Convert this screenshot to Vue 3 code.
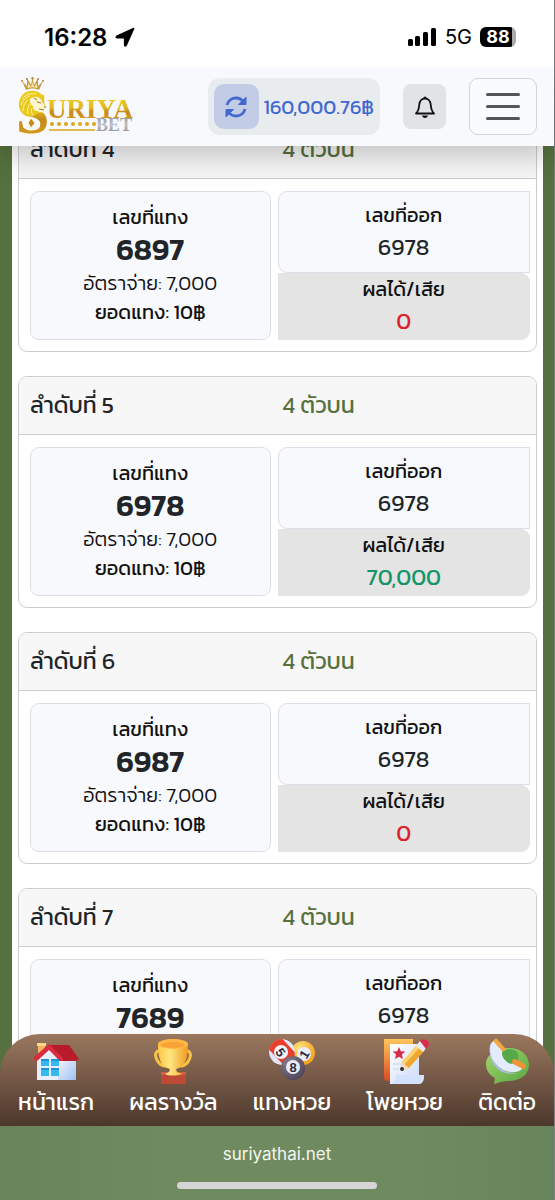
<script setup>
import { onMounted, ref } from 'vue'

const balance = ref('160,000.76฿')
const listRef = ref(null)

const bets = ref([
  { order: 4, type: '4 ตัวบน', number: '6897', rate: '7,000', amount: 10, drawn: '6978', result: '0' },
  { order: 5, type: '4 ตัวบน', number: '6978', rate: '7,000', amount: 10, drawn: '6978', result: '70,000' },
  { order: 6, type: '4 ตัวบน', number: '6987', rate: '7,000', amount: 10, drawn: '6978', result: '0' },
  { order: 7, type: '4 ตัวบน', number: '7689', rate: '7,000', amount: 10, drawn: '6978', result: '0' },
])

const menus = [
  { key: 'home', label: 'หน้าแรก' },
  { key: 'award', label: 'ผลรางวัล' },
  { key: 'lotto', label: 'แทงหวย' },
  { key: 'bill', label: 'โพยหวย' },
  { key: 'contact', label: 'ติดต่อ' },
]

onMounted(() => {
  listRef.value.scrollTop = 26
})
</script>

<template>
  <div class="shell">
    <div class="status">
      <div class="status-side">
        <span class="clock">16:28</span>
        <svg width="20" height="20" viewBox="0 0 20 20">
          <path d="M18.400.8 1.500 8.400c-1.600.8-1.200 3 .5 3h6.200c.4 0 .7.300.7.700v6c0 1.900 2.300 2.200 3 .5L19.400 1.800c.3-.8-.2-1.300-1-1z" fill="#000" />
        </svg>
      </div>
      <div class="status-side">
        <svg width="30" height="20" viewBox="0 0 30 20">
          <rect x="1" y="12" width="5" height="7" rx="1.500" />
          <rect x="8" y="9" width="5" height="10" rx="1.500" />
          <rect x="16" y="5" width="5" height="14" rx="1.500" />
          <rect x="24" y="1" width="5" height="18" rx="1.500" />
        </svg>
        <span class="network">5G</span>
        <span class="battery">88</span>
      </div>
    </div>

    <header class="topbar">
      <a class="logo" href="#" aria-label="Suriya Bet">
        <svg width="118" height="60" viewBox="0 0 118 60">
          <defs>
            <linearGradient id="gold" x1="0" y1="0" x2="0" y2="1">
              <stop offset="0" stop-color="#f3d51f" />
              <stop offset=".45" stop-color="#e2b81c" />
              <stop offset=".6" stop-color="#c58a1c" />
              <stop offset="1" stop-color="#e3a51d" />
            </linearGradient>
            <linearGradient id="silver" x1="0" y1="0" x2="0" y2="1">
              <stop offset="0" stop-color="#8e9197" />
              <stop offset=".5" stop-color="#c0c2c7" />
              <stop offset="1" stop-color="#7f8288" />
            </linearGradient>
          </defs>
          <path d="M9 13 5 4l5 5V1l4 7 1.500-8L17 8l4-7v8l5-5-4 9c-4-2-9-2-13 0z" fill="#c79a3e" />
          <path d="M11 11 9 8l2 2V6l3 4 1.500-5L17 10l3-4v4l2-2-2 3c-3-1-6-1-9 0z" fill="#f7e4a3" />
          <circle cx="5" cy="4" r="1" fill="#b9822e" />
          <circle cx="10" cy="2" r="1" fill="#b9822e" />
          <circle cx="15.500" cy="1.200" r="1.200" fill="#b9822e" />
          <circle cx="21" cy="2" r="1" fill="#b9822e" />
          <circle cx="26" cy="4" r="1" fill="#b9822e" />
          <text x="-1" y="56" class="logo-s" fill="url(#gold)">S</text>
          <path d="M25 18C19 11 6 13 3 22c-3 7 0 14 6 17 3 1 6 1 8 0l4-3c3 1 5-1 5-3l3-3-4-9z" fill="#e9c91c" />
          <path d="M13 22c5-4 11-2 12 3l4 5-2 2v2c-2 2-5 1-7 0-3 0-4-3-4-5-3-1-3-4-3-7z" fill="#fdf6cf" />
          <path d="M5 22c4-5 9-6 14-5M4 28c2-5 5-8 9-9M6 34c0-5 2-9 5-11M11 37c-1-4 0-8 2-10M16 38c-2-2-2-5-1-7" fill="none" stroke="#fff4a8" stroke-width="1" />
          <path d="M20 25l4 1M27 30l2 0M22 32l5 1M17 21l3 2" fill="none" stroke="#a87414" stroke-width="1" />
          <path d="M14 41l4 5-4 5-3-5z" fill="#c58a1c" stroke="#fff8dc" stroke-width="1" />
          <text x="30" y="41" class="logo-name" fill="url(#gold)">URIYA</text>
          <text x="79" y="54" class="logo-bet" fill="url(#silver)">BET</text>
          <circle v-for="n in 7" :key="n" :cx="28 + n * 7" cy="47" r="2" fill="#dba51c" />
          <path d="M32 53h46" stroke="#dba51c" stroke-width="1.500" />
        </svg>
      </a>

      <div class="tools">
        <div class="wallet">
          <button class="refresh" type="button" aria-label="รีเฟรช">
            <svg width="24" height="24" viewBox="0 0 24 24" fill="none" stroke="#4169d0" stroke-width="2.800">
              <path d="M3 10C4 5.500 8 3 12 3c3.500 0 6 1.500 8 4.500M21 14c-1 4.500-5 7-9 7-3.500 0-6-1.500-8-4.500" />
              <path d="M22 2v7.500h-7.500zM2 22v-7.500h7.500z" fill="#4169d0" stroke-width="1" stroke-linejoin="round" />
            </svg>
          </button>
          <span class="balance">{{ balance }}</span>
        </div>

        <button class="bell" type="button" aria-label="แจ้งเตือน">
          <svg width="22" height="24" viewBox="0 0 22 24">
            <path d="M2 18.500c2.500-2.500 3-5 3.300-9C5.600 6 8 3.500 11 3.500s5.400 2.500 5.700 6c.3 4 .8 6.500 3.300 9z" fill="none" stroke="#111" stroke-width="1.800" stroke-linejoin="round" />
            <path d="M9.500 3a1.500 1.500 0 0 1 3 0zM8 20.500h6c-.3 1.500-1.500 2.500-3 2.500s-2.700-1-3-2.500z" fill="#111" />
          </svg>
        </button>

        <button class="burger" type="button" aria-label="เมนู">
          <span></span>
          <span></span>
          <span></span>
        </button>
      </div>
    </header>

    <div class="stage">
      <main ref="listRef" class="list">
        <div class="panel">
          <article v-for="bet in bets" :key="bet.order" class="card">
            <div class="card-head">
              <h2>ลำดับที่ {{ bet.order }}</h2>
              <span class="bet-type">{{ bet.type }}</span>
            </div>
            <div class="card-body">
              <div class="pick">
                <span class="label">เลขที่แทง</span>
                <strong>{{ bet.number }}</strong>
                <span class="rate">อัตราจ่าย: {{ bet.rate }}</span>
                <span class="amount">ยอดแทง: {{ bet.amount }}฿</span>
              </div>
              <div class="outcome">
                <div class="drawn">
                  <span class="label">เลขที่ออก</span>
                  <span class="value">{{ bet.drawn }}</span>
                </div>
                <div class="result">
                  <span class="label">ผลได้/เสีย</span>
                  <span class="value" :class="bet.result === '0' ? 'lose' : 'win'">{{ bet.result }}</span>
                </div>
              </div>
            </div>
          </article>
        </div>
      </main>

      <nav class="menu">
        <a v-for="menu in menus" :key="menu.key" href="#" class="menu-item">
          <svg v-if="menu.key === 'home'" width="48" height="48" viewBox="0 0 48 48">
            <defs>
              <linearGradient id="wall" x1="0" y1="0" x2="1" y2="1">
                <stop offset="0" stop-color="#f4f6ff" />
                <stop offset="1" stop-color="#9fc0f2" />
              </linearGradient>
            </defs>
            <path d="M6 7h7v13H6z" fill="#f1b565" />
            <path d="M5 6h9v3H5z" fill="#ffd58a" />
            <path d="M5 23 16 11l13 12v20H5z" fill="#e6eeff" />
            <path d="M26 22h18v21H26z" fill="url(#wall)" />
            <path d="M17 8h20l10 14-3 2H27z" fill="#b81b2c" />
            <path d="M17 7 2 20v3l3 1L17 13l11 11h3v-3z" fill="#d92d3e" />
            <path d="M9 22h8v7H9zM19 22h8v7h-8zM9 31h8v8H9zM19 31h8v8h-8z" fill="#35b9ee" />
            <path d="M9 22h8v2H9zM19 22h8v2h-8zM9 31h8v2H9zM19 31h8v2h-8z" fill="#1f93d5" />
          </svg>
          <svg v-else-if="menu.key === 'award'" width="48" height="48" viewBox="0 0 48 48">
            <defs>
              <linearGradient id="cup" x1="0" y1="0" x2="1" y2="0">
                <stop offset="0" stop-color="#ffc545" />
                <stop offset=".4" stop-color="#ffe680" />
                <stop offset="1" stop-color="#f19a20" />
              </linearGradient>
            </defs>
            <path d="M13 15c-6-3-8 2-5 8 2 4 5 6 9 6M35 15c6-3 8 2 5 8-2 4-5 6-9 6" fill="none" stroke="#fbc145" stroke-width="3" />
            <path d="M12 35h25v12H12z" fill="#bd4a35" />
            <path d="M12 35h25v3H12z" fill="#d35f42" />
            <path d="M9 7c0 17 4 23 12 25l-1 3-4 2c4 2 12 2 17 0l-5-2-1-3c8-2 12-8 12-25z" fill="url(#cup)" />
            <ellipse cx="24" cy="7" rx="15" ry="5" fill="#ffb943" />
            <ellipse cx="24" cy="8" rx="12" ry="3" fill="#f8a238" />
          </svg>
          <svg v-else-if="menu.key === 'lotto'" width="48" height="48" viewBox="0 0 48 48">
            <defs>
              <radialGradient id="ballYellow" cx=".35" cy=".3" r=".8">
                <stop offset="0" stop-color="#ffe27a" />
                <stop offset="1" stop-color="#f29a17" />
              </radialGradient>
              <radialGradient id="ballBlack" cx=".35" cy=".3" r=".8">
                <stop offset="0" stop-color="#8b7f8f" />
                <stop offset="1" stop-color="#4b4055" />
              </radialGradient>
              <clipPath id="ballRed">
                <circle cx="14" cy="15" r="13" />
              </clipPath>
            </defs>
            <circle cx="35" cy="16" r="12" fill="url(#ballYellow)" />
            <circle cx="36" cy="17" r="7" fill="#e9edfb" />
            <text x="36" y="22" class="ball-text" transform="rotate(-60 36 17)">1</text>
            <g clip-path="url(#ballRed)">
              <circle cx="14" cy="15" r="13" fill="#dfe6fa" />
              <path d="M1 0 29 30" stroke="#ea3d2b" stroke-width="17" />
            </g>
            <circle cx="13" cy="15" r="7" fill="#f5f6ff" />
            <text x="13" y="20" class="ball-text" transform="rotate(55 13 15)">5</text>
            <circle cx="25" cy="31" r="12" fill="url(#ballBlack)" />
            <circle cx="25" cy="30" r="7" fill="#e9edfb" />
            <text x="25" y="35" class="ball-text">8</text>
          </svg>
          <svg v-else-if="menu.key === 'bill'" width="48" height="48" viewBox="0 0 48 48">
            <defs>
              <linearGradient id="folder" x1="0" y1="0" x2="0" y2="1">
                <stop offset="0" stop-color="#ffc65b" />
                <stop offset="1" stop-color="#db4a22" />
              </linearGradient>
              <linearGradient id="paper" x1="0" y1="0" x2="1" y2="1">
                <stop offset="0" stop-color="#ffffff" />
                <stop offset="1" stop-color="#c8d8f7" />
              </linearGradient>
            </defs>
            <path d="M3 2h29v42H7c-3 0-4-2-4-4z" fill="url(#folder)" />
            <path d="M9 7h29v32h5c0 5-2 8-5 8H9z" fill="url(#paper)" />
            <path d="M15 38h28c0 6-2 9-6 9H8c5 0 7-3 7-9z" fill="#d3e1fc" />
            <path d="m18 10 1.800 4.200 4.600.4-3.500 3 1.100 4.500-4-2.400-4 2.400 1.100-4.500-3.500-3 4.600-.4z" fill="#d92b4c" />
            <path d="M12 27h8M12 32h6" stroke="#d4def3" stroke-width="1.500" />
            <path d="m21 25 16-18 7 6-16 18-8 3z" fill="#efa82d" />
            <path d="m21 25 16-18 3 2-17 19z" fill="#ffd26c" />
            <path d="m21 25 7 6-8 3z" fill="#f6dcb8" />
            <circle cx="21" cy="32" r="2" fill="#333" />
            <path d="m35 9 4-5 7 6-4 5z" fill="#e7eaf5" />
            <path d="m39 4c3-4 10 0 9 4l-3 4z" fill="#d92b4c" />
          </svg>
          <svg v-else width="48" height="48" viewBox="0 0 48 48">
            <defs>
              <linearGradient id="bubble" x1="0" y1="0" x2="1" y2="1">
                <stop offset="0" stop-color="#a5d86b" />
                <stop offset="1" stop-color="#58a544" />
              </linearGradient>
            </defs>
            <path d="M26 11c12 0 20 7 20 17S37 44 25 44c-4 0-8 1-14 3l1-6C6 38 3 33 3 27c0-9 10-16 23-16z" fill="url(#bubble)" />
            <path d="M17 17c5-6 12-6 16-3 3 3 3 7 1 10l-5 8c-7-1-13-8-12-15z" fill="#55a94b" />
            <path d="M12 3C5 6 5 17 11 25c7 9 18 13 27 8l3-5-9-3c-3 3-6 2-9-1-4-4-5-7-3-12z" fill="#e3ebfd" />
            <path d="M8 9c-2 7 0 12 5 18 6 7 14 10 22 9-7 2-17 1-24-8C6 21 6 13 8 9z" fill="#aebde8" />
            <path d="m14 2 8 9c1 2-1 4-3 3l-8-9c-1-2 1-4 3-3z" fill="#f5a742" />
            <path d="m32 22 10 5c2 2 0 6-2 5l-10-5c-2-2 0-6 2-5z" fill="#f19434" />
          </svg>
          <span>{{ menu.label }}</span>
        </a>
      </nav>
    </div>

    <footer class="browser">
      <span class="address">suriyathai.net</span>
      <span class="home-bar"></span>
    </footer>
  </div>
</template>

<style>
body {
  margin: 0;
  background: #56713f;
}
</style>

<style scoped>
.shell {
  box-sizing: border-box;
  display: flex;
  flex-direction: column;
  height: 100vh;
  border-right: 1px solid #7d7f80;
  background: #56713f;
  color: #212529;
  font-family: Kanit, Inter, "Noto Sans Thai", "Noto Sans", sans-serif;
  font-size: 20px;
}

button {
  padding: 0;
  border: 0;
  font: inherit;
  cursor: pointer;
}

svg {
  display: block;
}

.status {
  display: flex;
  position: relative;
  z-index: 3;
  flex: none;
  align-items: center;
  justify-content: space-between;
  height: 67px;
  padding: 7px 38px 0 44px;
  box-sizing: border-box;
  background: #fff;
  color: #000;
  font-family: Inter, sans-serif;
}

.status-side {
  display: flex;
  align-items: center;
  gap: 8px;
}

.clock {
  font-size: 24px;
  font-weight: 600;
}

.network {
  font-size: 20px;
}

.battery {
  width: 36px;
  border-radius: 6px;
  background: linear-gradient(90deg, #000 88%, #aaa 88%);
  color: #fff;
  font-size: 18px;
  font-weight: 700;
  line-height: 20px;
  text-align: center;
}

.topbar {
  display: flex;
  position: relative;
  z-index: 2;
  flex: none;
  align-items: center;
  justify-content: space-between;
  height: 79px;
  padding: 0 17px;
  background: #f8f9fc;
  box-shadow: 0 8px 32px rgba(0, 0, 0, 0.24);
}

.logo-s,
.logo-name,
.logo-bet {
  font-family: "Liberation Serif", serif;
  font-weight: 700;
}

.logo-s {
  font-size: 60px;
}

.logo-name {
  font-size: 27px;
}

.logo-bet {
  font-size: 18px;
}

.tools {
  display: flex;
  align-items: center;
  gap: 23px;
}

.wallet {
  display: flex;
  align-items: center;
  gap: 5px;
  padding: 6px;
  border-radius: 12px;
  background: #e9ecef;
}

.refresh {
  display: grid;
  place-items: center;
  width: 45px;
  height: 45px;
  border-radius: 10px;
  background: #c2cce6;
}

.balance {
  color: #4169d0;
  font-size: 20px;
}

.bell {
  display: grid;
  place-items: center;
  width: 43px;
  height: 45px;
  border-radius: 8px;
  background: #e2e3e6;
}

.burger {
  display: flex;
  flex-direction: column;
  align-items: center;
  justify-content: center;
  gap: 9px;
  width: 68px;
  height: 57px;
  border: 1px solid #d3d4d8;
  border-radius: 9px;
  background: #fafbfd;
}

.burger span {
  width: 34px;
  height: 3px;
  border-radius: 2px;
  background: #55565a;
}

.stage {
  display: flex;
  position: relative;
  flex: 1;
  flex-direction: column;
  min-height: 0;
}

.list {
  flex: 1;
  min-height: 0;
  overflow-y: auto;
  padding: 0 11px 0 12px;
  scrollbar-width: none;
}

.panel {
  display: flex;
  flex-direction: column;
  gap: 24px;
  padding: 0 6px 92px;
  background: #fff;
}

.card {
  overflow: hidden;
  border: 1px solid #cdcdd0;
  border-radius: 9px;
  background: #fff;
}

.card-head {
  display: grid;
  grid-template-columns: 1fr 1fr;
  align-items: center;
  height: 57px;
  padding-bottom: 2px;
  border-bottom: 1px solid #cdcdd0;
  box-sizing: border-box;
  height: 58px;
  background: #f7f7f7;
  font-size: 23px;
  line-height: 32px;
}

.card-head h2 {
  margin: 0;
  padding-left: 11px;
  font-size: 23px;
  font-weight: 400;
}

.bet-type {
  padding-left: 5px;
  color: #56713f;
}

.card-body {
  display: grid;
  grid-template-columns: 1fr 1fr;
  padding: 12px 0 11px;
}

.pick,
.drawn,
.result {
  display: flex;
  flex-direction: column;
  align-items: center;
}

.pick {
  margin: 0 7px 0 11px;
  padding: 11px 0 12px;
  border: 1px solid #dcdee4;
  border-radius: 9px;
  background: #f8f9fc;
}

.pick strong {
  font-size: 30px;
  font-weight: 600;
  line-height: 38px;
}

.label,
.rate,
.amount {
  color: #111;
  font-size: 20px;
  line-height: 28px;
}

.rate {
  font-weight: 300;
}

.amount {
  line-height: 30px;
}

.outcome {
  display: flex;
  flex-direction: column;
  margin-right: 6px;
}

.drawn {
  flex: 1;
  padding-top: 9px;
  border: 1px solid #dcdee8;
  border-radius: 9px 0 0 9px;
  background: #f8f9fc;
}

.result {
  padding: 2px 0 1px;
  border-radius: 0 9px 9px 0;
  background: #e4e4e4;
}

.value {
  font-size: 23px;
  line-height: 36px;
}

.lose {
  color: #dc2327;
}

.win {
  color: #149468;
}

.menu {
  display: flex;
  position: absolute;
  right: 0;
  bottom: 0;
  left: 0;
  justify-content: space-between;
  height: 92px;
  padding: 3px 18px 0;
  box-sizing: border-box;
  border-radius: 40px 40px 0 0;
  background: linear-gradient(#9a775e, #4c382c);
}

.menu-item {
  display: flex;
  flex-direction: column;
  align-items: center;
  color: #fff;
  font-size: 23px;
  line-height: 34px;
  text-decoration: none;
}

.ball-text {
  fill: #2d2a3a;
  font-family: "Liberation Sans", sans-serif;
  font-size: 13px;
  font-weight: 700;
  text-anchor: middle;
}

.browser {
  display: flex;
  flex: none;
  flex-direction: column;
  align-items: center;
  gap: 16px;
  height: 74px;
  padding-top: 16px;
  box-sizing: border-box;
  background: linear-gradient(90deg, #67845a, #708a60 30%, #708a60 75%, #67845a);
  color: #f3f7ef;
  font-family: Inter, sans-serif;
}

.address {
  font-size: 17px;
  line-height: 24px;
}

.home-bar {
  width: 36%;
  height: 7px;
  border-radius: 4px;
  background: #d5d5d5;
}
</style>
